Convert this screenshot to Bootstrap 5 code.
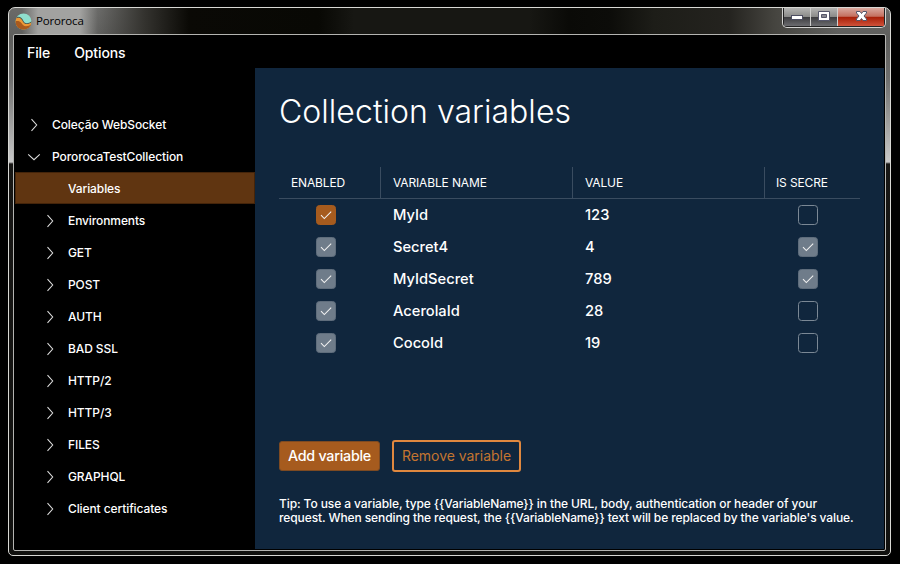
<!DOCTYPE html>
<html lang="en">
<head>
<meta charset="utf-8">
<title>Pororoca</title>
<link href="https://cdn.jsdelivr.net/npm/bootstrap@5.3.0/dist/css/bootstrap.min.css" rel="stylesheet">
<style>
body{background:#000;color:#fff;font-family:Inter,sans-serif;width:900px;height:564px;overflow:hidden;padding:7px 9px 8px 8px}
.win{width:883px;height:549px;border:1px solid #d8d8d4;border-radius:7px 7px 5px 5px;background:linear-gradient(#6a6a68 0,#5e5e5c 30px,#6e6e6d 70px,#c8c8c8 154px,#181715 156px,#11110f 100%);padding:0 4px 4px}
.titlebar{height:26px;font:11.5px/26px "Open Sans",sans-serif;letter-spacing:-.17px;color:#000;margin:0 -4px;padding-left:6px;border-radius:6px 6px 0 0;background:linear-gradient(90deg,#5e5e5c00 0,#5e5e5c00 90px,#34332f 135px,#0a0905 180px,#080804 310px,#171713 345px,#171713 520px,#0a0a07 560px,#0c0c09 600px,#1d1d18 645px,#24231f 720px,#45443f 765px,#5e5e5c00 830px)}
.appname{padding:0 14px;margin-left:-10px;background:linear-gradient(90deg,#9a9a9800,#a2a2a0 16px,#a2a2a0 calc(100% - 18px),#80808000);-webkit-mask:none}
.appicon{margin-top:5px;position:relative;z-index:1}
.ctl{height:20px;border:1px solid #d4d4d2;border-top:0;border-radius:0 0 5px 5px;margin-right:4px;overflow:hidden;background:#222;padding:0 1px 1px}
.ctl span{height:18px;border-right:1px solid #cfcfcd;background:linear-gradient(#b4b4b2,#8b8b89 48%,#3e3e40 52%,#6c6c70)}
.ctl .cls{border:0;background:linear-gradient(#d9a99f,#c4705f 46%,#a82008 52%,#d0523a)}
.pane{border:1px solid #b4b4b1;border-radius:2px;background:#000;height:517px;padding:0 1px 1px}
.menubar{height:33px;font-size:14px;font-weight:500;padding:2px 0 0 12px;gap:24px;letter-spacing:-.1px}
.body-row{height:481px}
.side{flex:none;width:240px;padding-top:41px;font-size:12px;font-weight:500;letter-spacing:-.1px}
.node{height:32px;padding-left:12px;gap:11px}
.node svg{margin-top:-1px}
.node.sub{padding-left:28px}
.node.sel{background:#603511;border:1px solid #44240a;padding:1px 0 0 52px;margin:-1px 0 1px}
.main{background:#10263d;padding:21px 24px 0}
h1{font-size:32px;font-weight:300;line-height:46px;margin:0 0 32px;letter-spacing:.04px}
.grid{display:grid;grid-template-columns:102px 192px 192px 95px;width:581px}
.th{height:32px;font-size:12px;line-height:31px;padding-left:12px;border-bottom:1px solid #3a4c60;border-right:1px solid #3a4c60;white-space:nowrap;letter-spacing:-.14px}
.th.last{border-right:0;padding-left:11px}
.td{height:32px;font-size:14.7px;line-height:32px;font-weight:500;padding-left:12px}
.c1,.c4{padding:6px 0 0 37px}
.c4{padding-left:33px}
.ck{width:20px;height:20px;border:1px solid #7b8895;border-radius:3.5px}
.ck.on{background:#6f7c8a;border-color:#5f6d7c}
.ck.hot{background:#a65b1e;border-color:#a65b1e}
.actions{margin-top:81px;gap:12px;height:32px}
.btn-add,.btn-del{font-size:14px;border-radius:3px;padding:0;line-height:1}
.btn-add,.btn-add:hover{width:101px;height:30px;background:#a65b1e;border:1px solid #7d4a22;color:#fff;font-weight:500;font-size:14.3px;letter-spacing:-.25px}
.btn-del,.btn-del:hover{width:129px;height:32px;border:2px solid #e0883f;color:#c47530;letter-spacing:-.03px}
.tip{font-size:12px;line-height:14px;font-weight:500;margin-top:25px;letter-spacing:-.1px;white-space:nowrap}
svg{flex:none;display:block}
</style>
<script src="https://cdn.jsdelivr.net/npm/bootstrap@5.3.0/dist/js/bootstrap.bundle.min.js"></script>
</head>
<body>
<svg class="d-none"><defs>
<path id="right" d="M4.5 1.2 9.7 7 4.5 12.8" fill="none" stroke="#dedede" stroke-width="1.05"/>
<path id="down" d="M1.2 4.3 7 9.7 12.8 4.3" fill="none" stroke="#dedede" stroke-width="1.05"/>
<path id="tick" d="M4 9.2 7.3 12.500 14.2 5.6" fill="none" stroke="#f2f2f2" stroke-width="1.05"/>
</defs></svg>
<div class="win">
<div class="titlebar d-flex">
<svg class="appicon" width="17" height="17" viewBox="0 0 17 17"><defs><clipPath id="disc"><circle cx="8.5" cy="8.5" r="8"/></clipPath></defs><g clip-path="url(#disc)"><rect width="17" height="17" fill="#8fdfcd"/><path d="M0 4.5C5 2.5 7 5 8.5 8S13 11 17 8V17H0Z" fill="#4a5850"/><path d="M0 5.5C5 3.5 6.500 6 8 8.700S13 12 17 9V17H0Z" fill="#ec9836"/><path d="M0 8.500C5 7 6 10 8 12S13 13.500 17 11V17H0Z" fill="#a95a1d"/></g></svg>
<span class="appname">Pororoca</span>
<div class="ctl d-flex ms-auto">
<span style="width:27px"><svg width="26" height="18"><rect x="7.500" y="7.500" width="11" height="4" fill="#fff" stroke="#4d4e62"/></svg></span>
<span style="width:27px"><svg width="26" height="18"><path d="M7.500 3.500h11v9h-11z" fill="#fff" stroke="#55566a"/><path d="M10.500 6.500h5v3h-5z" fill="#888890" stroke="#55566a"/></svg></span>
<span class="cls" style="width:46px"><svg width="46" height="18"><path d="M18.500 3.500h3.500l1.500 2 1.500-2h3.500v1.500l-2.500 3 2.500 3v1.500h-3.500l-1.500-2-1.500 2h-3.500V11l2.500-3-2.500-3z" fill="#fff" stroke="#55566a"/></svg></span>
</div>
</div>
<div class="pane">
<div class="menubar d-flex align-items-center"><span>File</span><span>Options</span></div>
<div class="body-row d-flex">
<div class="side">
<div class="node d-flex align-items-center"><svg width="14" height="14"><use href="#right"/></svg><span>Coleção WebSocket</span></div>
<div class="node d-flex align-items-center"><svg width="14" height="14"><use href="#down"/></svg><span>PororocaTestCollection</span></div>
<div class="node sel d-flex align-items-center"><span>Variables</span></div>
<div class="node sub d-flex align-items-center"><svg width="14" height="14"><use href="#right"/></svg><span>Environments</span></div>
<div class="node sub d-flex align-items-center"><svg width="14" height="14"><use href="#right"/></svg><span>GET</span></div>
<div class="node sub d-flex align-items-center"><svg width="14" height="14"><use href="#right"/></svg><span>POST</span></div>
<div class="node sub d-flex align-items-center"><svg width="14" height="14"><use href="#right"/></svg><span>AUTH</span></div>
<div class="node sub d-flex align-items-center"><svg width="14" height="14"><use href="#right"/></svg><span>BAD SSL</span></div>
<div class="node sub d-flex align-items-center"><svg width="14" height="14"><use href="#right"/></svg><span>HTTP/2</span></div>
<div class="node sub d-flex align-items-center"><svg width="14" height="14"><use href="#right"/></svg><span>HTTP/3</span></div>
<div class="node sub d-flex align-items-center"><svg width="14" height="14"><use href="#right"/></svg><span>FILES</span></div>
<div class="node sub d-flex align-items-center"><svg width="14" height="14"><use href="#right"/></svg><span>GRAPHQL</span></div>
<div class="node sub d-flex align-items-center"><svg width="14" height="14"><use href="#right"/></svg><span>Client certificates</span></div>
</div>
<div class="main flex-fill">
<h1>Collection variables</h1>
<div class="grid">
<div class="th">ENABLED</div><div class="th">VARIABLE NAME</div><div class="th">VALUE</div><div class="th last">IS SECRE</div>
<div class="c1"><div class="ck hot"><svg width="18" height="18"><use href="#tick"/></svg></div></div><div class="td">MyId</div><div class="td">123</div><div class="c4"><div class="ck"></div></div>
<div class="c1"><div class="ck on"><svg width="18" height="18"><use href="#tick"/></svg></div></div><div class="td">Secret4</div><div class="td">4</div><div class="c4"><div class="ck on"><svg width="18" height="18"><use href="#tick"/></svg></div></div>
<div class="c1"><div class="ck on"><svg width="18" height="18"><use href="#tick"/></svg></div></div><div class="td">MyIdSecret</div><div class="td">789</div><div class="c4"><div class="ck on"><svg width="18" height="18"><use href="#tick"/></svg></div></div>
<div class="c1"><div class="ck on"><svg width="18" height="18"><use href="#tick"/></svg></div></div><div class="td">AcerolaId</div><div class="td">28</div><div class="c4"><div class="ck"></div></div>
<div class="c1"><div class="ck on"><svg width="18" height="18"><use href="#tick"/></svg></div></div><div class="td">CocoId</div><div class="td">19</div><div class="c4"><div class="ck"></div></div>
</div>
<div class="actions d-flex align-items-center"><button type="button" class="btn btn-add">Add variable</button><button type="button" class="btn btn-del">Remove variable</button></div>
<div class="tip">Tip: To use a variable, type {{VariableName}} in the URL, body, authentication or header of your<br>request. When sending the request, the {{VariableName}} text will be replaced by the variable's value.</div>
</div>
</div>
</div>
</div>
</body>
</html>
